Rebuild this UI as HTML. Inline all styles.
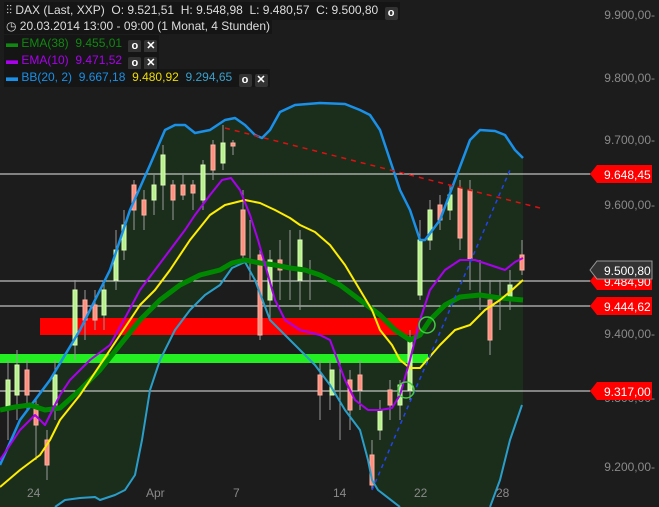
<!DOCTYPE html>
<html><head><meta charset="utf-8"><style>
html,body{margin:0;padding:0;background:#1c1c1c;width:659px;height:507px;overflow:hidden;font-family:"Liberation Sans",sans-serif}
.t{position:absolute;font-size:12px;color:#ddd;white-space:nowrap;background:#151515;padding:0 2px;line-height:16px}
.ax{position:absolute;font-size:12px;color:#8a8a8a;right:4px}
.xl{position:absolute;font-size:12px;color:#8a8a8a;top:486px}
.ic{display:inline-block;width:13px;height:13px;background:#333;border-radius:2px;color:#fff;font-size:11px;text-align:center;line-height:13px;font-weight:bold;margin-left:3px;vertical-align:-2px}
</style></head><body>
<svg width="659" height="507" style="position:absolute;left:0;top:0">
<polygon fill="#1b2e1b" points="0,465 20,420 50,380 80,330 110,270 130,210 150,165 165,130 175,125 185,125 195,133 210,130 225,120 235,118 245,125 255,135 262,138 270,130 280,112 295,105 320,103 345,104 360,110 370,115 380,130 390,160 400,190 410,210 420,240 425,240 440,220 455,180 470,140 480,130 495,131 505,135 515,150 523,158 523,405 510,440 500,480 490,507 400,507 378,490 372,480 368,460 360,430 345,410 330,385 315,365 295,345 270,320 255,280 245,262 232,268 220,285 205,295 190,310 175,330 160,360 150,390 142,440 135,475 125,490 115,495 100,500 80,498 65,500 55,507 0,507"/>
<rect x="40" y="318" width="380" height="17" fill="#ff0000"/>
<rect x="0" y="354" width="428" height="9" fill="#22ee22"/>
<g stroke="#e8e8e8" stroke-width="1">
<line x1="0" y1="174" x2="595" y2="174"/><line x1="0" y1="281" x2="595" y2="281"/>
<line x1="0" y1="306" x2="595" y2="306"/><line x1="0" y1="391" x2="595" y2="391"/></g>
<g id="c" stroke-width="1">
<g stroke="#999">
<line x1="8" y1="360" x2="8" y2="440"/><line x1="17" y1="350" x2="17" y2="420"/><line x1="27" y1="360" x2="27" y2="410"/><line x1="36" y1="400" x2="36" y2="460"/><line x1="47" y1="430" x2="47" y2="480"/><line x1="55" y1="360" x2="55" y2="420"/><line x1="75" y1="280" x2="75" y2="360"/><line x1="85" y1="290" x2="85" y2="340"/><line x1="95" y1="290" x2="95" y2="330"/><line x1="104" y1="280" x2="104" y2="330"/><line x1="116" y1="230" x2="116" y2="290"/><line x1="124" y1="210" x2="124" y2="260"/><line x1="134" y1="180" x2="134" y2="230"/><line x1="144" y1="190" x2="144" y2="230"/><line x1="154" y1="175" x2="154" y2="215"/><line x1="163" y1="145" x2="163" y2="210"/><line x1="173" y1="180" x2="173" y2="220"/><line x1="183" y1="175" x2="183" y2="200"/><line x1="193" y1="180" x2="193" y2="210"/><line x1="203" y1="160" x2="203" y2="210"/><line x1="213" y1="140" x2="213" y2="180"/><line x1="223" y1="125" x2="223" y2="170"/><line x1="233" y1="140" x2="233" y2="155"/><line x1="243" y1="190" x2="243" y2="260"/><line x1="250" y1="220" x2="250" y2="280"/><line x1="260" y1="250" x2="260" y2="340"/><line x1="270" y1="250" x2="270" y2="320"/><line x1="280" y1="240" x2="280" y2="300"/><line x1="290" y1="230" x2="290" y2="300"/><line x1="300" y1="230" x2="300" y2="310"/><line x1="310" y1="260" x2="310" y2="300"/><line x1="320" y1="360" x2="320" y2="420"/><line x1="330" y1="360" x2="330" y2="410"/><line x1="340" y1="360" x2="340" y2="440"/><line x1="350" y1="370" x2="350" y2="430"/><line x1="360" y1="360" x2="360" y2="410"/><line x1="372" y1="440" x2="372" y2="490"/><line x1="380" y1="400" x2="380" y2="440"/><line x1="390" y1="380" x2="390" y2="420"/><line x1="400" y1="380" x2="400" y2="420"/><line x1="410" y1="330" x2="410" y2="400"/><line x1="420" y1="220" x2="420" y2="300"/><line x1="430" y1="200" x2="430" y2="250"/><line x1="440" y1="195" x2="440" y2="230"/><line x1="450" y1="185" x2="450" y2="220"/><line x1="460" y1="180" x2="460" y2="250"/><line x1="470" y1="180" x2="470" y2="290"/><line x1="480" y1="260" x2="480" y2="310"/><line x1="490" y1="280" x2="490" y2="355"/><line x1="500" y1="280" x2="500" y2="330"/><line x1="510" y1="270" x2="510" y2="310"/><line x1="522" y1="240" x2="522" y2="275"/>
</g>
<g fill="#b8f090" stroke="#d8ffb0"><rect x="6" y="380" width="4" height="30"/><rect x="15" y="365" width="4" height="30"/><rect x="53" y="375" width="4" height="30"/><rect x="73" y="290" width="4" height="55"/><rect x="102" y="290" width="4" height="25"/><rect x="114" y="250" width="4" height="30"/><rect x="122" y="225" width="4" height="25"/><rect x="152" y="185" width="4" height="15"/><rect x="161" y="155" width="4" height="30"/><rect x="201" y="165" width="4" height="35"/><rect x="221" y="143" width="4" height="20"/><rect x="268" y="260" width="4" height="40"/><rect x="298" y="240" width="4" height="40"/><rect x="330" y="370" width="4" height="25"/><rect x="378" y="410" width="4" height="20"/><rect x="398" y="385" width="4" height="20"/><rect x="408" y="340" width="4" height="50"/><rect x="418" y="240" width="4" height="55"/><rect x="428" y="210" width="4" height="30"/><rect x="448" y="195" width="4" height="15"/><rect x="508" y="285" width="4" height="15"/></g>
<g fill="#ff9080" stroke="#ffb0a0"><rect x="25" y="370" width="4" height="25"/><rect x="34" y="405" width="4" height="20"/><rect x="45" y="440" width="4" height="25"/><rect x="83" y="300" width="4" height="20"/><rect x="93" y="305" width="4" height="15"/><rect x="132" y="185" width="4" height="25"/><rect x="142" y="200" width="4" height="15"/><rect x="171" y="185" width="4" height="15"/><rect x="181" y="185" width="4" height="10"/><rect x="191" y="185" width="4" height="8"/><rect x="211" y="145" width="4" height="25"/><rect x="231" y="143" width="4" height="3"/><rect x="241" y="210" width="4" height="45"/><rect x="258" y="255" width="4" height="80"/><rect x="278" y="260" width="4" height="10"/><rect x="318" y="375" width="4" height="20"/><rect x="348" y="380" width="4" height="30"/><rect x="358" y="375" width="4" height="15"/><rect x="370" y="455" width="4" height="30"/><rect x="388" y="390" width="4" height="15"/><rect x="438" y="205" width="4" height="15"/><rect x="458" y="188" width="4" height="50"/><rect x="468" y="190" width="4" height="70"/><rect x="488" y="300" width="4" height="40"/><rect x="520" y="255" width="4" height="15"/></g>
</g>
<g fill="none" stroke-linejoin="round">
<polyline stroke="#1a90e8" stroke-width="2.5" points="0,465 20,420 50,380 80,330 110,270 130,210 150,165 165,130 175,125 185,125 195,133 210,130 225,120 235,118 245,125 255,135 262,138 270,130 280,112 295,105 320,103 345,104 360,110 370,115 380,130 390,160 400,190 410,210 420,240 425,240 440,220 455,180 470,140 480,130 495,131 505,135 515,150 523,158"/>
<polyline stroke="#2a9ec8" stroke-width="2" points="55,507 65,500 80,498 95,497 100,500 115,495 125,490 135,475 142,440 150,390 160,360 175,330 190,310 205,295 220,285 232,268 245,262 255,280 270,320 295,345 315,365 330,385 345,410 360,430 368,460 372,480 378,490 400,507"/>
<polyline stroke="#2a9ec8" stroke-width="2" points="490,507 500,480 510,440 522,405"/>
<polyline stroke="#008800" stroke-width="5" points="0,410 15,407 30,405 45,410 60,408 80,390 100,370 120,345 140,320 160,300 180,285 200,275 220,270 232,263 245,260 260,263 275,265 290,268 305,270 320,275 340,285 360,300 380,315 395,330 410,340 420,335 430,320 445,305 460,297 480,295 500,298 523,300"/>
<polyline stroke="#ffee00" stroke-width="2" points="0,487 20,470 40,455 50,440 60,420 80,395 100,365 120,335 140,305 155,290 170,270 190,240 210,215 225,205 245,200 260,203 275,210 290,218 300,225 315,232 330,245 345,265 360,290 372,310 380,330 392,345 400,360 410,368 420,368 440,345 455,330 470,325 485,310 500,300 512,290 523,280"/>
<polyline stroke="#aa00ee" stroke-width="2" points="0,460 20,430 35,415 45,425 60,395 70,380 90,360 110,345 125,318 140,290 155,270 170,250 185,230 195,215 210,195 222,180 231,178 240,190 250,215 258,240 268,275 275,300 285,320 300,330 320,335 330,340 345,380 355,400 368,410 380,410 392,408 400,395 410,360 420,320 430,290 445,270 460,260 475,260 490,265 505,270 515,262 523,258"/>
<line x1="225" y1="128" x2="540" y2="208" stroke="#dd1111" stroke-width="1.5" stroke-dasharray="5,5"/>
<line x1="372" y1="490" x2="510" y2="170" stroke="#2244ee" stroke-width="1.5" stroke-dasharray="4,4"/>
<circle cx="427" cy="325" r="8" stroke="#44cc44" stroke-width="1.5"/>
<circle cx="406" cy="390" r="8" stroke="#44cc44" stroke-width="1.5"/>
</g>
</svg>
<div class="ax" style="top:8px">9.900,00-</div>
<div class="ax" style="top:71px">9.800,00-</div>
<div class="ax" style="top:133px">9.700,00-</div>
<div class="ax" style="top:198px">9.600,00-</div>
<div class="ax" style="top:327px">9.400,00-</div>
<div class="ax" style="top:391px">9.300,00-</div>
<div class="ax" style="top:460px">9.200,00-</div>
<svg width="659" height="507" style="position:absolute;left:0;top:0">
<g font-family="Liberation Sans" font-size="12" fill="#fff">
<path d="M590,174 L597,165 L652,165 L652,183 L597,183 Z" fill="#ff0000"/><text x="604" y="179">9.648,45</text>
<path d="M590,281 L597,272 L652,272 L652,290 L597,290 Z" fill="#ff0000"/><text x="604" y="286">9.484,90</text>
<path d="M590,270 L597,261 L652,261 L652,279 L597,279 Z" fill="#333" stroke="#999"/><text x="604" y="275">9.500,80</text>
<path d="M590,306 L597,297 L652,297 L652,315 L597,315 Z" fill="#ff0000"/><text x="604" y="311">9.444,62</text>
<path d="M590,391 L597,382 L652,382 L652,400 L597,400 Z" fill="#ff0000"/><text x="604" y="396">9.317,00</text>
</g></svg>
<div class="xl" style="left:27px">24</div>
<div class="xl" style="left:146px">Apr</div>
<div class="xl" style="left:233px">7</div>
<div class="xl" style="left:333px">14</div>
<div class="xl" style="left:414px">22</div>
<div class="xl" style="left:496px">28</div>
<div class="t" style="left:4px;top:2px">⫶⫶ DAX (Last, XXP)&nbsp; O: 9.521,51&nbsp; H: 9.548,98&nbsp; L: 9.480,57&nbsp; C: 9.500,80 <span class="ic">o</span></div>
<div class="t" style="left:4px;top:18px">◷ 20.03.2014 13:00 - 09:00 (1 Monat, 4 Stunden)</div>
<div class="t" style="left:4px;top:35px;color:#118811"><b>▬</b> EMA(38)&nbsp; 9.455,01 <span class="ic">o</span><span class="ic">✕</span></div>
<div class="t" style="left:4px;top:52px;color:#aa00ee"><b>▬</b> EMA(10)&nbsp; 9.471,52 <span class="ic">o</span><span class="ic">✕</span></div>
<div class="t" style="left:4px;top:69px;color:#1a90e8"><b>▬</b> BB(20, 2)&nbsp; 9.667,18&nbsp; <span style="color:#eedd00">9.480,92</span>&nbsp; <span style="color:#3aa0cc">9.294,65</span> <span class="ic">o</span><span class="ic">✕</span></div>
</body></html>
